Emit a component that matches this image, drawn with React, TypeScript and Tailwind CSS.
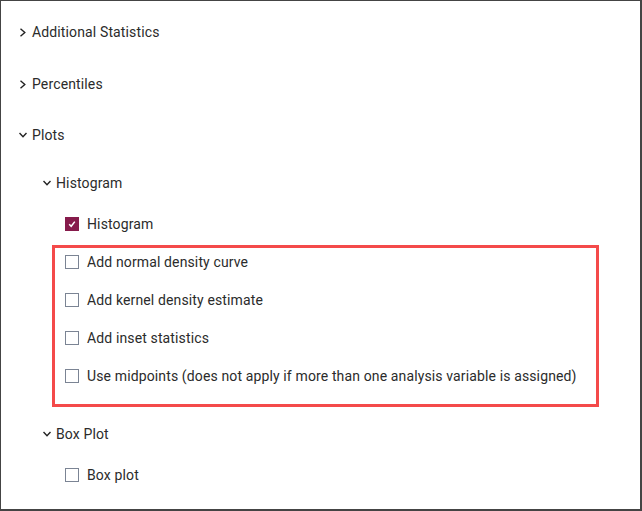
import type { ReactElement } from 'react'

function ChevronRight(): ReactElement {
    return (
        <svg width="8" height="9" viewBox="0 0 8 9" className="block">
            <path d="M1.5 0.8 L5.8 4.5 L1.5 8.2" fill="none" stroke="#222" strokeWidth="1.4" />
        </svg>
    )
}

function ChevronDown(): ReactElement {
    return (
        <svg width="8" height="8" viewBox="0 0 8 8" className="block">
            <path d="M0.5 2 L4 5.8 L7.5 2" fill="none" stroke="#222" strokeWidth="1.4" />
        </svg>
    )
}

function Section({ label, open, className }: { label: string; open: boolean; className: string }): ReactElement {
    return (
        <div className={`flex h-[20px] items-center ${className}`}>
            <span className="flex w-[13px] items-center">{open ? <ChevronDown /> : <ChevronRight />}</span>
            <span>{label}</span>
        </div>
    )
}

function Checkbox({ label, checked, className }: { label: string; checked?: boolean; className: string }): ReactElement {
    return (
        <div className={`flex h-[20px] items-center gap-2 ${className}`}>
            {checked ? (
                <span className="flex h-[14px] w-[14px] items-center justify-center bg-[#861b4b]">
                    <svg width="10" height="10" viewBox="0 0 10 10">
                        <path d="M2.2 5.2 L4.2 7.3 L7.8 2.6" fill="none" stroke="#fff" strokeWidth="1.5" />
                    </svg>
                </span>
            ) : (
                <span className="h-[14px] w-[14px] border border-[#7b8494] bg-white" />
            )}
            <span>{label}</span>
        </div>
    )
}

export default function App(): ReactElement {
    return (
        <div
            className="h-[511px] w-[642px] overflow-hidden border-t border-l border-r-2 border-b-2 border-[#444] bg-white pt-[21px] text-[14px] tracking-[0.13px] text-[#2b2b2b]"
            style={{ fontFamily: 'Roboto, "Noto Sans", sans-serif' }}
        >
            <Section label="Additional Statistics" open={false} className="ml-[18px]" />
            <Section label="Percentiles" open={false} className="ml-[18px] mt-[32px]" />
            <Section label="Plots" open={true} className="ml-[18px] mt-[31px]" />
            <Section label="Histogram" open={true} className="ml-[42px] mt-[28px]" />
            <Checkbox label="Histogram" checked className="ml-[64px] mt-[21px]" />

            <div className="ml-[51px] mt-[11px] flex w-[547px] flex-col gap-[18px] border-[3px] border-[#f44a4a] pb-[18px] pl-[10px] pt-[4px]">
                <Checkbox label="Add normal density curve" className="" />
                <Checkbox label="Add kernel density estimate" className="" />
                <Checkbox label="Add inset statistics" className="" />
                <Checkbox label="Use midpoints (does not apply if more than one analysis variable is assigned)" className="" />
            </div>

            <Section label="Box Plot" open={true} className="ml-[42px] mt-[17px]" />
            <Checkbox label="Box plot" className="ml-[64px] mt-[21px]" />
        </div>
    )
}
